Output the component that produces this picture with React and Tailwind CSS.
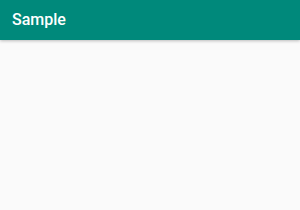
import React from 'react';

export default function App() {
  return (
    <div className="w-[300px] h-[210px] bg-[#fafafa] font-['Roboto',sans-serif]">
      <div className="h-10 bg-[#00897b] flex items-center px-3 shadow-[0_1px_3px_rgba(0,0,0,0.25)]">
        <h1 className="text-white text-[16px] font-medium">Sample</h1>
      </div>
    </div>
  );
}
